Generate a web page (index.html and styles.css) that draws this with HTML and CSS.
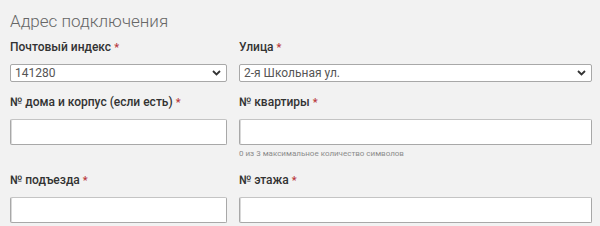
FILE: index.html
```html
<!DOCTYPE html>
<html lang="ru">
<head>
  <meta charset="UTF-8">
  <title>Адрес подключения</title>
  <link rel="stylesheet" href="styles.css">
</head>
<body>
<div class="address">
  <div class="address_title">Адрес подключения</div>
  <div class="address_grid">
    <div class="field">
      <label class="field_label">Почтовый индекс <span class="req">*</span></label>
      <div class="select_wrap">
        <select class="field_select">
          <option>141280</option>
        </select>
        <svg class="chevron" width="9" height="6" viewBox="0 0 9 6"><path d="M1 1 L4.5 4.5 L8 1" fill="none" stroke="#333" stroke-width="1.8"/></svg>
      </div>
    </div>
    <div class="field">
      <label class="field_label">Улица <span class="req">*</span></label>
      <div class="select_wrap">
        <select class="field_select">
          <option>2-я Школьная ул.</option>
        </select>
        <svg class="chevron" width="9" height="6" viewBox="0 0 9 6"><path d="M1 1 L4.5 4.5 L8 1" fill="none" stroke="#333" stroke-width="1.8"/></svg>
      </div>
    </div>
    <div class="field">
      <label class="field_label">№ дома и корпус (если есть) <span class="req">*</span></label>
      <input class="field_input" type="text">
    </div>
    <div class="field">
      <label class="field_label">№ квартиры <span class="req">*</span></label>
      <input class="field_input" type="text">
      <div class="field_hint">0 из 3 максимальное количество символов</div>
    </div>
    <div class="field">
      <label class="field_label">№ подъезда <span class="req">*</span></label>
      <input class="field_input" type="text">
    </div>
    <div class="field">
      <label class="field_label">№ этажа <span class="req">*</span></label>
      <input class="field_input" type="text">
    </div>
  </div>
</div>
</body>
</html>
```

FILE: styles.css
```css
body {
  margin: 0;
  background: #f2f2f2;
  font-family: Roboto, "Noto Sans", sans-serif;
  color: #333333;
}

.address {
  padding: 9px 8px 0 10px;
}

.address_title {
  font-size: 17px;
  font-weight: 300;
  line-height: 24px;
  color: #666666;
  margin-bottom: 6px;
}

.address_grid {
  display: grid;
  grid-template-columns: 217px 353px;
  column-gap: 12px;
  row-gap: 12px;
  align-items: start;
}

.field {
  display: flex;
  flex-direction: column;
}

.field_label {
  font-size: 12px;
  font-weight: 500;
  line-height: 16px;
  margin-bottom: 8px;
  color: #333333;
  white-space: nowrap;
}

.req {
  font-size: 11px;
  color: #b8363a;
}

.select_wrap {
  position: relative;
}

.field_select {
  -webkit-appearance: none;
  appearance: none;
  display: block;
  width: 100%;
  height: 18px;
  margin: 0;
  padding: 0 20px 0 4px;
  border: 1px solid #a8a8a8;
  border-radius: 2px;
  background: #ffffff;
  font-family: inherit;
  font-size: 12px;
  line-height: 16px;
  color: #555555;
  box-sizing: border-box;
}

.chevron {
  position: absolute;
  right: 6px;
  top: 6px;
}

.field_input {
  display: block;
  width: 100%;
  height: 26px;
  margin: 0;
  border: 1px solid #a8a8a8;
  border-top-color: #c4c4c4;
  border-radius: 2px;
  background: #ffffff;
  box-shadow: inset 1px 0 0 #d8d8d8;
  box-sizing: border-box;
}

.field_hint {
  margin-top: 3px;
  font-size: 8px;
  line-height: 12px;
  color: #8c8c8c;
}
```
